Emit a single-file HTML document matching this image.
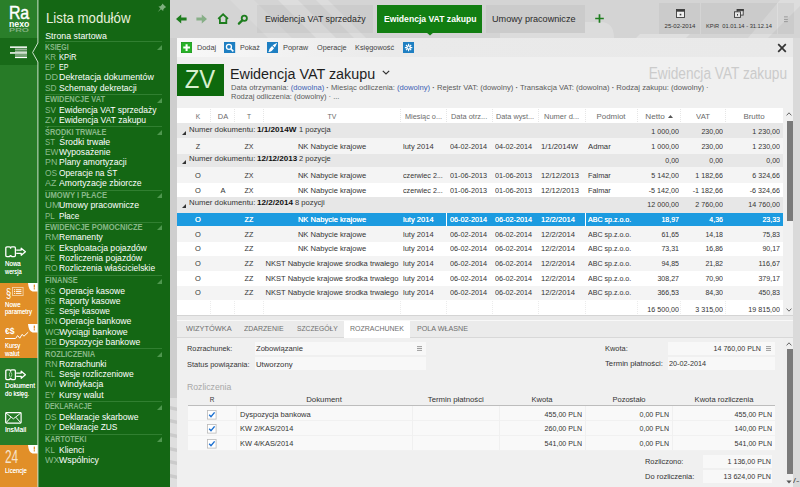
<!DOCTYPE html>
<html lang="pl"><head><meta charset="utf-8"><title>Ewidencja VAT zakupu</title>
<style>
html,body{margin:0;padding:0;}
body{width:800px;height:487px;overflow:hidden;position:relative;background:#d9d9d9;font-family:"Liberation Sans",sans-serif;}
#app{position:absolute;left:0;top:0;width:800px;height:487px;overflow:hidden;}
#app div,#app svg{position:absolute;}
.t{white-space:nowrap;overflow:visible;}
b{font-weight:bold;}
</style></head><body><div id="app">
<div style="left:170.00px;top:0.00px;width:630.00px;height:487.00px;background:#d4d4d4;"></div>
<svg width="630" height="38" viewBox="0 0 630 38" style="left:170px;top:0"><g fill="#fff"><polygon points="108,0 128,0 166,38 146,38" opacity=".22"/><polygon points="146,0 158,0 196,38 184,38" opacity=".2"/><polygon points="60,0 84,0 122,38 98,38" opacity=".12"/><path d="M330,38 V33 H415 V22 H432 Q444,23 444,38 Z" opacity=".2"/><polygon points="610,0 630,0 630,6 598,38 578,38" opacity=".22"/><polygon points="470,34 520,34 516,38 466,38" opacity=".25"/></g></svg>
<div style="left:170.00px;top:38.00px;width:7.00px;height:360.00px;background:#cecece;"></div>
<div style="left:170.00px;top:398.00px;width:7.00px;height:89.00px;background:#dfdfdf;"></div>
<svg width="7" height="89" viewBox="0 0 7 89" style="left:170px;top:398px"><g fill="#cbcbcb"><polygon points="0,8 7,9.6 7,13 0,11.4"/><polygon points="0,21 7,22.6 7,26 0,24.4"/><polygon points="0,35 7,36.6 7,40 0,38.4"/><polygon points="0,49 7,50.6 7,54 0,52.4"/><polygon points="0,62 7,63.6 7,67 0,65.4"/><polygon points="0,76 7,77.6 7,81 0,79.4"/></g></svg>
<div style="left:793.00px;top:38.00px;width:7.00px;height:449.00px;background:#dadada;"></div>
<div style="left:0.00px;top:0.00px;width:38.00px;height:487.00px;background:#277b27;"></div>
<div style="left:0.00px;top:0.00px;width:38.00px;height:38.00px;background:#2a7f2a;"></div>
<div style="left:0.00px;top:38.00px;width:38.00px;height:27.00px;background:#186a18;"></div>
<div style="left:38.00px;top:0.00px;width:132.00px;height:487.00px;background:#146714;"></div>
<div class="t" style="left:9.00px;top:0.57px;width:400px;text-align:left;font-size:18.5px;line-height:24.05px;color:#fff;transform:scaleX(0.8626);transform-origin:0 50%;letter-spacing:-0.3px;-webkit-text-stroke:0.45px #fff;">Ra</div>
<div class="t" style="left:9.20px;top:18.71px;width:400px;text-align:left;font-size:8.6px;line-height:11.18px;color:#fff;font-weight:bold;transform:scaleX(1.0163);transform-origin:0 50%;">nexo</div>
<div class="t" style="left:9.40px;top:27.42px;width:400px;text-align:left;font-size:5.2px;line-height:6.76px;color:#7fb07f;font-weight:bold;transform:scaleX(1.7748);transform-origin:0 50%;">PRO</div>
<svg width="18" height="13" viewBox="0 0 18 13" style="left:10.4px;top:46.4px"><rect x="0" y="0.4" width="17" height="1.5" fill="#fff"/><rect x="5" y="2.6" width="12" height="1.2" fill="#b8c9b8"/><rect x="5" y="4.6" width="12" height="1.2" fill="#b8c9b8"/><rect x="0" y="6.2" width="17" height="1.5" fill="#fff"/><rect x="5" y="8.4" width="12" height="1.2" fill="#b8c9b8"/><rect x="5" y="10.6" width="12" height="1.5" fill="#fff"/></svg>
<div style="left:0.00px;top:282.60px;width:38.40px;height:75.90px;background:#e18f28;"></div>
<div style="left:0.00px;top:445.00px;width:38.40px;height:42.00px;background:#e18f28;"></div>
<svg width="10" height="9" viewBox="0 0 10 9" style="left:28.3px;top:282.6px"><path d="M0,0 H10 V8.4 H4.6 Q0.5,7.4 0,0 Z" fill="#fff"/><rect x="5.7" y="1.6" width="1.3" height="3.0" fill="#e18f28"/><rect x="5.7" y="5.2" width="1.3" height="1.2" fill="#e18f28"/></svg>
<svg width="10" height="9" viewBox="0 0 10 9" style="left:28.3px;top:323.6px"><path d="M0,0 H10 V8.4 H4.6 Q0.5,7.4 0,0 Z" fill="#fff"/><rect x="5.7" y="1.6" width="1.3" height="3.0" fill="#e18f28"/><rect x="5.7" y="5.2" width="1.3" height="1.2" fill="#e18f28"/></svg>
<svg width="10" height="9" viewBox="0 0 10 9" style="left:28.3px;top:445px"><path d="M0,0 H10 V8.4 H4.6 Q0.5,7.4 0,0 Z" fill="#fff"/><rect x="5.7" y="1.6" width="1.3" height="3.0" fill="#e18f28"/><rect x="5.7" y="5.2" width="1.3" height="1.2" fill="#e18f28"/></svg>
<svg width="42" height="487" viewBox="0 0 42 487" style="left:0;top:0"><polygon points="38.6,43 32.8,52.5 38.6,62" fill="#146714"/><polyline points="37.9,0 37.9,43 32.6,52.5 37.9,62 37.9,487" fill="none" stroke="#cfe2cf" stroke-width="1"/></svg>
<div class="t" style="left:4.90px;top:259.77px;width:400px;text-align:left;font-size:6.5px;line-height:8.45px;color:#fff;transform:scaleX(0.9507);transform-origin:0 50%;text-shadow:0 0 0.5px rgba(255,255,255,.8);">Nowa</div>
<div class="t" style="left:4.90px;top:267.57px;width:400px;text-align:left;font-size:6.5px;line-height:8.45px;color:#fff;transform:scaleX(0.8838);transform-origin:0 50%;text-shadow:0 0 0.5px rgba(255,255,255,.8);">wersja</div>
<div class="t" style="left:4.90px;top:300.57px;width:400px;text-align:left;font-size:6.5px;line-height:8.45px;color:#fff;transform:scaleX(0.9327);transform-origin:0 50%;text-shadow:0 0 0.5px rgba(255,255,255,.8);">Nowe</div>
<div class="t" style="left:4.90px;top:308.38px;width:400px;text-align:left;font-size:6.5px;line-height:8.45px;color:#fff;transform:scaleX(0.9227);transform-origin:0 50%;text-shadow:0 0 0.5px rgba(255,255,255,.8);">parametry</div>
<div class="t" style="left:4.90px;top:342.38px;width:400px;text-align:left;font-size:6.5px;line-height:8.45px;color:#fff;transform:scaleX(0.9088);transform-origin:0 50%;text-shadow:0 0 0.5px rgba(255,255,255,.8);">Kursy</div>
<div class="t" style="left:4.90px;top:349.97px;width:400px;text-align:left;font-size:6.5px;line-height:8.45px;color:#fff;transform:scaleX(0.9556);transform-origin:0 50%;text-shadow:0 0 0.5px rgba(255,255,255,.8);">walut</div>
<div class="t" style="left:4.90px;top:382.38px;width:400px;text-align:left;font-size:6.5px;line-height:8.45px;color:#fff;transform:scaleX(1.0126);transform-origin:0 50%;text-shadow:0 0 0.5px rgba(255,255,255,.8);">Dokument</div>
<div class="t" style="left:4.90px;top:390.17px;width:400px;text-align:left;font-size:6.5px;line-height:8.45px;color:#fff;transform:scaleX(0.9340);transform-origin:0 50%;text-shadow:0 0 0.5px rgba(255,255,255,.8);">do księg.</div>
<div class="t" style="left:4.90px;top:425.57px;width:400px;text-align:left;font-size:6.5px;line-height:8.45px;color:#fff;transform:scaleX(1.0345);transform-origin:0 50%;text-shadow:0 0 0.5px rgba(255,255,255,.8);">InsMail</div>
<div class="t" style="left:4.90px;top:466.97px;width:400px;text-align:left;font-size:6.5px;line-height:8.45px;color:#fff;transform:scaleX(0.9183);transform-origin:0 50%;text-shadow:0 0 0.5px rgba(255,255,255,.8);">Licencje</div>
<div class="t" style="left:5.00px;top:446.43px;width:400px;text-align:left;font-size:17.5px;line-height:22.75px;color:#f6e3c8;transform:scaleX(0.6781);transform-origin:0 50%;">24</div>
<svg width="22" height="12" viewBox="0 0 22 12" style="left:4.9px;top:245.8px" fill="none" stroke="#fff" stroke-width="1.3"><path d="M0.8,2 Q0.8,0.9 1.9,0.9 H4.4 Q5.6,0.9 5.6,2.2 Q5.6,0.9 6.8,0.9 H9.3 Q10.4,0.9 10.4,2 V9.6 Q10.4,10.6 9.3,10.6 H7 L5.6,9.6 L4.2,10.6 H1.9 Q0.8,10.6 0.8,9.6 Z" stroke-linejoin="round"/><path d="M11.2,4.1 H16.2 V2.2 L20.4,5.7 L16.2,9.2 V7.3 H11.2" stroke-linejoin="round"/></svg>
<div class="t" style="left:5.60px;top:284.43px;width:400px;text-align:left;font-size:13.5px;line-height:17.55px;color:#fff;transform:scaleX(0.6926);transform-origin:0 50%;">§</div>
<svg width="12" height="10" viewBox="0 0 12 10" style="left:12.3px;top:287.2px"><rect x="0.5" y="0.5" width="10.6" height="8" fill="none" stroke="#f4d2a4" stroke-width="0.9"/><g fill="#fff"><rect x="2" y="2.3" width="1" height="0.9"/><rect x="3.8" y="2.3" width="5.6" height="0.9"/><rect x="2" y="4.1" width="1" height="0.9"/><rect x="3.8" y="4.1" width="5.6" height="0.9"/><rect x="2" y="5.9" width="1" height="0.9"/><rect x="3.8" y="5.9" width="5.6" height="0.9"/></g></svg>
<div class="t" style="left:5.40px;top:327.27px;width:400px;text-align:left;font-size:8.2px;line-height:10.66px;color:#fff;font-weight:bold;transform:scaleX(1.0525);transform-origin:0 50%;">€$</div>
<div style="left:5.40px;top:337.70px;width:9.80px;height:1.00px;background:#fff;"></div>
<svg width="14" height="9" viewBox="0 0 14 9" style="left:14.6px;top:330.6px" fill="none" stroke="#fff" stroke-width="1"><polyline points="0.4,7.8 2.6,4.6 4.8,7.2 7,3.4 9,5.2 13.2,1.2"/></svg>
<svg width="22" height="12" viewBox="0 0 22 12" style="left:4.9px;top:368.6px" fill="none" stroke="#fff" stroke-width="1.3"><path d="M0.8,2 Q0.8,0.9 1.9,0.9 H4.4 Q5.6,0.9 5.6,2.2 Q5.6,0.9 6.8,0.9 H9.3 Q10.4,0.9 10.4,2 V9.6 Q10.4,10.6 9.3,10.6 H7 L5.6,9.6 L4.2,10.6 H1.9 Q0.8,10.6 0.8,9.6 Z" stroke-linejoin="round"/><ellipse cx="5.6" cy="5.6" rx="1.2" ry="2.4" stroke-width="0.8" stroke="#bfe0bf"/><path d="M11.2,4.1 H16.2 V2.2 L20.4,5.7 L16.2,9.2 V7.3 H11.2" stroke-linejoin="round"/></svg>
<svg width="17" height="12" viewBox="0 0 17 12" style="left:5px;top:412.4px" fill="none" stroke="#fff" stroke-width="1.2"><rect x="0.7" y="0.7" width="15.4" height="10.4" rx="0.8"/><path d="M1,1 L8.4,6.8 L15.8,1 M1,10.8 L6,5.2 M15.8,10.8 L10.8,5.2" stroke-width="1"/></svg>
<div class="t" style="left:46.40px;top:9.37px;width:400px;text-align:left;font-size:14.2px;line-height:18.46px;color:#e9f0dd;transform:scaleX(0.9309);transform-origin:0 50%;">Lista modułów</div>
<svg width="9.6" height="9.6" viewBox="0 0 9 9" style="left:156.6px;top:2.6px" fill="#7fb07f" stroke="none"><path d="M5,0.4 L8.6,4 L7.4,4.4 L6,5.8 L5.8,7.6 L3.8,5.8 L0.6,8.6 L3.2,5.2 L1.4,3.2 L3.2,3 L4.6,1.6 Z"/></svg>
<div class="t" style="left:45.20px;top:30.78px;width:400px;text-align:left;font-size:8.8px;line-height:11.44px;color:#fff;">Strona startowa</div>
<div style="left:45.00px;top:41.10px;width:117.00px;height:1.00px;background:#317f31;"></div>
<div class="t" style="left:45.20px;top:42.57px;width:400px;text-align:left;font-size:8.2px;line-height:10.66px;color:#88b888;font-weight:bold;transform:scaleX(0.8509);transform-origin:0 50%;">KSIĘGI</div>
<svg width="5" height="5" viewBox="0 0 5 5" style="left:157.4px;top:44.70px"><polygon points="5,0 5,5 0,5" fill="#4f974f"/></svg>
<div class="t" style="left:45.20px;top:51.98px;width:400px;text-align:left;font-size:8.8px;line-height:11.44px;color:#8dbc8d;transform:scaleX(0.9059);transform-origin:0 50%;">KR</div>
<div class="t" style="left:59.30px;top:51.98px;width:400px;text-align:left;font-size:8.8px;line-height:11.44px;color:#fff;transform:scaleX(0.8712);transform-origin:0 50%;">KPiR</div>
<div class="t" style="left:45.20px;top:62.16px;width:400px;text-align:left;font-size:8.8px;line-height:11.44px;color:#8dbc8d;transform:scaleX(0.8535);transform-origin:0 50%;">EP</div>
<div class="t" style="left:59.30px;top:62.16px;width:400px;text-align:left;font-size:8.8px;line-height:11.44px;color:#fff;transform:scaleX(0.8008);transform-origin:0 50%;">EP</div>
<div class="t" style="left:45.20px;top:72.34px;width:400px;text-align:left;font-size:8.8px;line-height:11.44px;color:#8dbc8d;transform:scaleX(1.0371);transform-origin:0 50%;">DD</div>
<div class="t" style="left:59.30px;top:72.34px;width:400px;text-align:left;font-size:8.8px;line-height:11.44px;color:#fff;transform:scaleX(1.0051);transform-origin:0 50%;">Dekretacja dokumentów</div>
<div class="t" style="left:45.20px;top:82.52px;width:400px;text-align:left;font-size:8.8px;line-height:11.44px;color:#8dbc8d;transform:scaleX(0.9472);transform-origin:0 50%;">SD</div>
<div class="t" style="left:59.30px;top:82.52px;width:400px;text-align:left;font-size:8.8px;line-height:11.44px;color:#fff;transform:scaleX(0.9817);transform-origin:0 50%;">Schematy dekretacji</div>
<div style="left:45.00px;top:93.90px;width:117.00px;height:1.00px;background:#317f31;"></div>
<div class="t" style="left:45.20px;top:95.37px;width:400px;text-align:left;font-size:8.2px;line-height:10.66px;color:#88b888;font-weight:bold;transform:scaleX(0.9079);transform-origin:0 50%;">EWIDENCJE VAT</div>
<svg width="5" height="5" viewBox="0 0 5 5" style="left:157.4px;top:97.50px"><polygon points="5,0 5,5 0,5" fill="#4f974f"/></svg>
<div class="t" style="left:45.20px;top:104.78px;width:400px;text-align:left;font-size:8.8px;line-height:11.44px;color:#8dbc8d;transform:scaleX(0.9215);transform-origin:0 50%;">SV</div>
<div class="t" style="left:59.30px;top:104.78px;width:400px;text-align:left;font-size:8.8px;line-height:11.44px;color:#fff;transform:scaleX(0.9684);transform-origin:0 50%;">Ewidencja VAT sprzedaży</div>
<div class="t" style="left:45.20px;top:114.96px;width:400px;text-align:left;font-size:8.8px;line-height:11.44px;color:#8dbc8d;transform:scaleX(0.9947);transform-origin:0 50%;">ZV</div>
<div class="t" style="left:59.30px;top:114.96px;width:400px;text-align:left;font-size:8.8px;line-height:11.44px;color:#fff;transform:scaleX(0.9780);transform-origin:0 50%;">Ewidencja VAT zakupu</div>
<div style="left:45.00px;top:126.10px;width:117.00px;height:1.00px;background:#317f31;"></div>
<div class="t" style="left:45.20px;top:127.57px;width:400px;text-align:left;font-size:8.2px;line-height:10.66px;color:#88b888;font-weight:bold;transform:scaleX(0.8972);transform-origin:0 50%;">ŚRODKI TRWAŁE</div>
<svg width="5" height="5" viewBox="0 0 5 5" style="left:157.4px;top:129.70px"><polygon points="5,0 5,5 0,5" fill="#4f974f"/></svg>
<div class="t" style="left:45.20px;top:136.98px;width:400px;text-align:left;font-size:8.8px;line-height:11.44px;color:#8dbc8d;transform:scaleX(0.8816);transform-origin:0 50%;">ST</div>
<div class="t" style="left:59.30px;top:136.98px;width:400px;text-align:left;font-size:8.8px;line-height:11.44px;color:#fff;">Środki trwałe</div>
<div class="t" style="left:45.20px;top:147.16px;width:400px;text-align:left;font-size:8.8px;line-height:11.44px;color:#8dbc8d;transform:scaleX(0.9548);transform-origin:0 50%;">EW</div>
<div class="t" style="left:59.30px;top:147.16px;width:400px;text-align:left;font-size:8.8px;line-height:11.44px;color:#fff;transform:scaleX(0.9748);transform-origin:0 50%;">Wyposażenie</div>
<div class="t" style="left:45.20px;top:157.34px;width:400px;text-align:left;font-size:8.8px;line-height:11.44px;color:#8dbc8d;transform:scaleX(1.0058);transform-origin:0 50%;">PN</div>
<div class="t" style="left:59.30px;top:157.34px;width:400px;text-align:left;font-size:8.8px;line-height:11.44px;color:#fff;transform:scaleX(0.9806);transform-origin:0 50%;">Plany amortyzacji</div>
<div class="t" style="left:45.20px;top:167.52px;width:400px;text-align:left;font-size:8.8px;line-height:11.44px;color:#8dbc8d;transform:scaleX(0.9498);transform-origin:0 50%;">OS</div>
<div class="t" style="left:59.30px;top:167.52px;width:400px;text-align:left;font-size:8.8px;line-height:11.44px;color:#fff;transform:scaleX(0.9480);transform-origin:0 50%;">Operacje na ŚT</div>
<div class="t" style="left:45.20px;top:177.70px;width:400px;text-align:left;font-size:8.8px;line-height:11.44px;color:#8dbc8d;transform:scaleX(1.0155);transform-origin:0 50%;">AZ</div>
<div class="t" style="left:59.30px;top:177.70px;width:400px;text-align:left;font-size:8.8px;line-height:11.44px;color:#fff;transform:scaleX(0.9891);transform-origin:0 50%;">Amortyzacje zbiorcze</div>
<div style="left:45.00px;top:189.60px;width:117.00px;height:1.00px;background:#317f31;"></div>
<div class="t" style="left:45.20px;top:191.07px;width:400px;text-align:left;font-size:8.2px;line-height:10.66px;color:#88b888;font-weight:bold;transform:scaleX(0.9289);transform-origin:0 50%;">UMOWY I PŁACE</div>
<svg width="5" height="5" viewBox="0 0 5 5" style="left:157.4px;top:193.20px"><polygon points="5,0 5,5 0,5" fill="#4f974f"/></svg>
<div class="t" style="left:45.20px;top:200.48px;width:400px;text-align:left;font-size:8.8px;line-height:11.44px;color:#8dbc8d;transform:scaleX(1.0886);transform-origin:0 50%;">UM</div>
<div class="t" style="left:59.30px;top:200.48px;width:400px;text-align:left;font-size:8.8px;line-height:11.44px;color:#fff;transform:scaleX(0.9917);transform-origin:0 50%;">Umowy pracownicze</div>
<div class="t" style="left:45.20px;top:210.66px;width:400px;text-align:left;font-size:8.8px;line-height:11.44px;color:#8dbc8d;transform:scaleX(0.8997);transform-origin:0 50%;">PL</div>
<div class="t" style="left:59.30px;top:210.66px;width:400px;text-align:left;font-size:8.8px;line-height:11.44px;color:#fff;transform:scaleX(0.9199);transform-origin:0 50%;">Płace</div>
<div style="left:45.00px;top:221.50px;width:117.00px;height:1.00px;background:#317f31;"></div>
<div class="t" style="left:45.20px;top:222.97px;width:400px;text-align:left;font-size:8.2px;line-height:10.66px;color:#88b888;font-weight:bold;transform:scaleX(0.9164);transform-origin:0 50%;">EWIDENCJE POMOCNICZE</div>
<svg width="5" height="5" viewBox="0 0 5 5" style="left:157.4px;top:225.10px"><polygon points="5,0 5,5 0,5" fill="#4f974f"/></svg>
<div class="t" style="left:45.20px;top:232.38px;width:400px;text-align:left;font-size:8.8px;line-height:11.44px;color:#8dbc8d;transform:scaleX(1.0276);transform-origin:0 50%;">RM</div>
<div class="t" style="left:59.30px;top:232.38px;width:400px;text-align:left;font-size:8.8px;line-height:11.44px;color:#fff;transform:scaleX(0.9734);transform-origin:0 50%;">Remanenty</div>
<div class="t" style="left:45.20px;top:242.56px;width:400px;text-align:left;font-size:8.8px;line-height:11.44px;color:#8dbc8d;transform:scaleX(0.8695);transform-origin:0 50%;">EK</div>
<div class="t" style="left:59.30px;top:242.56px;width:400px;text-align:left;font-size:8.8px;line-height:11.44px;color:#fff;transform:scaleX(0.9813);transform-origin:0 50%;">Eksploatacja pojazdów</div>
<div class="t" style="left:45.20px;top:252.74px;width:400px;text-align:left;font-size:8.8px;line-height:11.44px;color:#8dbc8d;transform:scaleX(0.8695);transform-origin:0 50%;">KE</div>
<div class="t" style="left:59.30px;top:252.74px;width:400px;text-align:left;font-size:8.8px;line-height:11.44px;color:#fff;transform:scaleX(0.9820);transform-origin:0 50%;">Rozliczenia pojazdów</div>
<div class="t" style="left:45.20px;top:262.92px;width:400px;text-align:left;font-size:8.8px;line-height:11.44px;color:#8dbc8d;transform:scaleX(0.9628);transform-origin:0 50%;">RO</div>
<div class="t" style="left:59.30px;top:262.92px;width:400px;text-align:left;font-size:8.8px;line-height:11.44px;color:#fff;transform:scaleX(0.9594);transform-origin:0 50%;">Rozliczenia właścicielskie</div>
<div style="left:45.00px;top:274.90px;width:117.00px;height:1.00px;background:#317f31;"></div>
<div class="t" style="left:45.20px;top:276.37px;width:400px;text-align:left;font-size:8.2px;line-height:10.66px;color:#88b888;font-weight:bold;transform:scaleX(0.9114);transform-origin:0 50%;">FINANSE</div>
<svg width="5" height="5" viewBox="0 0 5 5" style="left:157.4px;top:278.50px"><polygon points="5,0 5,5 0,5" fill="#4f974f"/></svg>
<div class="t" style="left:45.20px;top:285.78px;width:400px;text-align:left;font-size:8.8px;line-height:11.44px;color:#8dbc8d;transform:scaleX(0.8894);transform-origin:0 50%;">KS</div>
<div class="t" style="left:59.30px;top:285.78px;width:400px;text-align:left;font-size:8.8px;line-height:11.44px;color:#fff;transform:scaleX(0.9707);transform-origin:0 50%;">Operacje kasowe</div>
<div class="t" style="left:45.20px;top:295.96px;width:400px;text-align:left;font-size:8.8px;line-height:11.44px;color:#8dbc8d;transform:scaleX(0.8680);transform-origin:0 50%;">RS</div>
<div class="t" style="left:59.30px;top:295.96px;width:400px;text-align:left;font-size:8.8px;line-height:11.44px;color:#fff;transform:scaleX(0.9765);transform-origin:0 50%;">Raporty kasowe</div>
<div class="t" style="left:45.20px;top:306.14px;width:400px;text-align:left;font-size:8.8px;line-height:11.44px;color:#8dbc8d;transform:scaleX(0.8300);transform-origin:0 50%;">SE</div>
<div class="t" style="left:59.30px;top:306.14px;width:400px;text-align:left;font-size:8.8px;line-height:11.44px;color:#fff;transform:scaleX(0.9386);transform-origin:0 50%;">Sesje kasowe</div>
<div class="t" style="left:45.20px;top:316.32px;width:400px;text-align:left;font-size:8.8px;line-height:11.44px;color:#8dbc8d;transform:scaleX(1.0160);transform-origin:0 50%;">BN</div>
<div class="t" style="left:59.30px;top:316.32px;width:400px;text-align:left;font-size:8.8px;line-height:11.44px;color:#fff;transform:scaleX(0.9870);transform-origin:0 50%;">Operacje bankowe</div>
<div class="t" style="left:45.20px;top:326.50px;width:400px;text-align:left;font-size:8.8px;line-height:11.44px;color:#8dbc8d;transform:scaleX(1.0052);transform-origin:0 50%;">WG</div>
<div class="t" style="left:59.30px;top:326.50px;width:400px;text-align:left;font-size:8.8px;line-height:11.44px;color:#fff;">Wyciągi bankowe</div>
<div class="t" style="left:45.20px;top:336.68px;width:400px;text-align:left;font-size:8.8px;line-height:11.44px;color:#8dbc8d;transform:scaleX(0.9799);transform-origin:0 50%;">DB</div>
<div class="t" style="left:59.30px;top:336.68px;width:400px;text-align:left;font-size:8.8px;line-height:11.44px;color:#fff;transform:scaleX(0.9826);transform-origin:0 50%;">Dyspozycje bankowe</div>
<div style="left:45.00px;top:348.20px;width:117.00px;height:1.00px;background:#317f31;"></div>
<div class="t" style="left:45.20px;top:349.67px;width:400px;text-align:left;font-size:8.2px;line-height:10.66px;color:#88b888;font-weight:bold;transform:scaleX(0.9100);transform-origin:0 50%;">ROZLICZENIA</div>
<svg width="5" height="5" viewBox="0 0 5 5" style="left:157.4px;top:351.80px"><polygon points="5,0 5,5 0,5" fill="#4f974f"/></svg>
<div class="t" style="left:45.20px;top:359.08px;width:400px;text-align:left;font-size:8.8px;line-height:11.44px;color:#8dbc8d;transform:scaleX(0.9956);transform-origin:0 50%;">RN</div>
<div class="t" style="left:59.30px;top:359.08px;width:400px;text-align:left;font-size:8.8px;line-height:11.44px;color:#fff;transform:scaleX(0.9717);transform-origin:0 50%;">Rozrachunki</div>
<div class="t" style="left:45.20px;top:369.26px;width:400px;text-align:left;font-size:8.8px;line-height:11.44px;color:#8dbc8d;transform:scaleX(0.8927);transform-origin:0 50%;">RL</div>
<div class="t" style="left:59.30px;top:369.26px;width:400px;text-align:left;font-size:8.8px;line-height:11.44px;color:#fff;transform:scaleX(0.9658);transform-origin:0 50%;">Sesje rozliczeniowe</div>
<div class="t" style="left:45.20px;top:379.44px;width:400px;text-align:left;font-size:8.8px;line-height:11.44px;color:#8dbc8d;transform:scaleX(1.0494);transform-origin:0 50%;">WI</div>
<div class="t" style="left:59.30px;top:379.44px;width:400px;text-align:left;font-size:8.8px;line-height:11.44px;color:#fff;transform:scaleX(0.9863);transform-origin:0 50%;">Windykacja</div>
<div class="t" style="left:45.20px;top:389.62px;width:400px;text-align:left;font-size:8.8px;line-height:11.44px;color:#8dbc8d;transform:scaleX(0.8472);transform-origin:0 50%;">EY</div>
<div class="t" style="left:59.30px;top:389.62px;width:400px;text-align:left;font-size:8.8px;line-height:11.44px;color:#fff;transform:scaleX(0.9794);transform-origin:0 50%;">Kursy walut</div>
<div style="left:45.00px;top:401.00px;width:117.00px;height:1.00px;background:#317f31;"></div>
<div class="t" style="left:45.20px;top:402.47px;width:400px;text-align:left;font-size:8.2px;line-height:10.66px;color:#88b888;font-weight:bold;transform:scaleX(0.8377);transform-origin:0 50%;">DEKLARACJE</div>
<svg width="5" height="5" viewBox="0 0 5 5" style="left:157.4px;top:404.60px"><polygon points="5,0 5,5 0,5" fill="#4f974f"/></svg>
<div class="t" style="left:45.20px;top:411.88px;width:400px;text-align:left;font-size:8.8px;line-height:11.44px;color:#8dbc8d;transform:scaleX(0.9472);transform-origin:0 50%;">DS</div>
<div class="t" style="left:59.30px;top:411.88px;width:400px;text-align:left;font-size:8.8px;line-height:11.44px;color:#fff;transform:scaleX(0.9746);transform-origin:0 50%;">Deklaracje skarbowe</div>
<div class="t" style="left:45.20px;top:422.06px;width:400px;text-align:left;font-size:8.8px;line-height:11.44px;color:#8dbc8d;transform:scaleX(0.9638);transform-origin:0 50%;">DY</div>
<div class="t" style="left:59.30px;top:422.06px;width:400px;text-align:left;font-size:8.8px;line-height:11.44px;color:#fff;transform:scaleX(0.9471);transform-origin:0 50%;">Deklaracje ZUS</div>
<div style="left:45.00px;top:433.70px;width:117.00px;height:1.00px;background:#317f31;"></div>
<div class="t" style="left:45.20px;top:435.17px;width:400px;text-align:left;font-size:8.2px;line-height:10.66px;color:#88b888;font-weight:bold;transform:scaleX(0.8708);transform-origin:0 50%;">KARTOTEKI</div>
<svg width="5" height="5" viewBox="0 0 5 5" style="left:157.4px;top:437.30px"><polygon points="5,0 5,5 0,5" fill="#4f974f"/></svg>
<div class="t" style="left:45.20px;top:444.58px;width:400px;text-align:left;font-size:8.8px;line-height:11.44px;color:#8dbc8d;transform:scaleX(0.9172);transform-origin:0 50%;">KL</div>
<div class="t" style="left:59.30px;top:444.58px;width:400px;text-align:left;font-size:8.8px;line-height:11.44px;color:#fff;transform:scaleX(0.9718);transform-origin:0 50%;">Klienci</div>
<div class="t" style="left:45.20px;top:454.76px;width:400px;text-align:left;font-size:8.8px;line-height:11.44px;color:#8dbc8d;transform:scaleX(1.0105);transform-origin:0 50%;">WX</div>
<div class="t" style="left:59.30px;top:454.76px;width:400px;text-align:left;font-size:8.8px;line-height:11.44px;color:#fff;transform:scaleX(0.9957);transform-origin:0 50%;">Wspólnicy</div>
<svg width="80" height="14" viewBox="0 0 80 14" style="left:174px;top:12px"><g fill="#1d7d1d"><path d="M2,7 L7.2,2.4 V5.6 H12.6 V8.4 H7.2 V11.6 Z"/><path d="M33,7 L27.8,2.4 V5.6 H22.4 V8.4 H27.8 V11.6 Z" opacity=".42"/></g><path d="M44.2,6.9 L49.1,2.3 L54,6.9 M45.9,6.2 V11 H52.3 V6.2" fill="none" stroke="#1d7d1d" stroke-width="1.8"/><circle cx="70.3" cy="6.2" r="2.6" fill="none" stroke="#1d7d1d" stroke-width="1.8"/><path d="M68.2,8.4 L64.9,11.6" stroke="#1d7d1d" stroke-width="2.3" stroke-linecap="round"/></svg>
<div style="left:257.00px;top:5.40px;width:116.00px;height:27.20px;background:rgba(0,0,0,.035);"></div>
<div style="left:377.00px;top:5.40px;width:105.00px;height:27.20px;background:#127e12;"></div>
<div style="left:486.00px;top:5.40px;width:99.00px;height:27.20px;background:rgba(0,0,0,.04);"></div>
<svg width="8" height="4" viewBox="0 0 8 4" style="left:426px;top:32.4px"><polygon points="0,0 8,0 4,3.6" fill="#127e12"/></svg>
<div class="t" style="left:264.50px;top:13.75px;width:400px;text-align:left;font-size:9.0px;line-height:11.7px;color:#2a2a2a;transform:scaleX(0.9772);transform-origin:0 50%;">Ewidencja VAT sprzedaży</div>
<div class="t" style="left:383.50px;top:13.75px;width:400px;text-align:left;font-size:9.0px;line-height:11.7px;color:#fff;font-weight:bold;transform:scaleX(0.9567);transform-origin:0 50%;">Ewidencja VAT zakupu</div>
<div class="t" style="left:492.00px;top:13.75px;width:400px;text-align:left;font-size:9.0px;line-height:11.7px;color:#2a2a2a;transform:scaleX(1.0118);transform-origin:0 50%;">Umowy pracownicze</div>
<svg width="9" height="9" viewBox="0 0 9 9" style="left:595.4px;top:14.4px"><path d="M4.5,0.2 V8.8 M0.2,4.5 H8.8" stroke="#1d7d1d" stroke-width="1.7"/></svg>
<div style="left:659.40px;top:3.40px;width:40.60px;height:31.00px;background:rgba(0,0,0,.04);"></div>
<div style="left:701.00px;top:3.40px;width:76.00px;height:31.00px;background:rgba(0,0,0,.04);"></div>
<div style="left:778.40px;top:3.40px;width:15.40px;height:31.00px;background:rgba(0,0,0,.04);"></div>
<svg width="9" height="9" viewBox="0 0 9 9" style="left:675.6px;top:8.8px"><rect x="0.5" y="0.5" width="8" height="8" fill="#f0f0f0" stroke="#3c3c3c" stroke-width="0.9"/><rect x="0.5" y="0.5" width="8" height="2.2" fill="#3c3c3c"/><rect x="3.7" y="4.8" width="1.6" height="1.6" fill="#3c3c3c"/></svg>
<svg width="10" height="9" viewBox="0 0 10 9" style="left:734.2px;top:8.8px" fill="#e6e6e6" stroke="#3c3c3c" stroke-width="0.9"><rect x="3.2" y="0.5" width="6" height="5.6"/><rect x="3.2" y="0.5" width="6" height="1.2" fill="#3c3c3c"/><rect x="0.5" y="2.8" width="6" height="5.6"/><rect x="3" y="5" width="1" height="1.6" fill="#3c3c3c" stroke="none"/></svg>
<div class="t" style="left:480.30px;top:21.54px;width:400px;text-align:center;font-size:6.1px;line-height:7.93px;color:#333;transform:scaleX(0.9870);transform-origin:50% 50%;">25-02-2014</div>
<div class="t" style="left:539.00px;top:21.54px;width:400px;text-align:center;font-size:6.1px;line-height:7.93px;color:#333;transform:scaleX(0.9402);transform-origin:50% 50%;white-space:pre;">KPiR  01.01.14 - 31.12.14</div>
<svg width="4" height="7" viewBox="0 0 4 7" style="left:784.2px;top:15.6px"><rect x="0" y="0.5" width="3.8" height="0.8" fill="#8a8a8a"/><rect x="0" y="2.9" width="3.8" height="0.8" fill="#8a8a8a"/><rect x="0" y="5.3" width="3.8" height="0.8" fill="#8a8a8a"/></svg>
<div style="left:177px;top:38px;width:616px;height:19.4px;background:linear-gradient(90deg,#f8f8f8 0%,#f4f4f4 12%,#eaeaea 34%,#e9e9e9 100%)"></div>
<div style="left:177px;top:57.4px;width:616px;height:51px;background:#f0f0f0"></div>
<svg width="11.2" height="11.2" viewBox="0 0 12 12" style="left:181px;top:42.3px"><rect x="0.4" y="0.4" width="11.2" height="11.2" fill="#27b227" stroke="#149414" stroke-width="0.9"/><path d="M6,2.4 V9.6 M2.4,6 H9.6" stroke="#fff" stroke-width="2.2"/></svg>
<div class="t" style="left:196.90px;top:42.89px;width:400px;text-align:left;font-size:7.4px;line-height:9.62px;color:#444;transform:scaleX(0.9878);transform-origin:0 50%;">Dodaj</div>
<svg width="11.2" height="11.2" viewBox="0 0 12 12" style="left:224.4px;top:42.3px"><rect width="12" height="12" fill="#1e7fc2"/><circle cx="5.3" cy="5.2" r="2.7" fill="none" stroke="#fff" stroke-width="1.4"/><path d="M7.3,7.3 L10,10" stroke="#fff" stroke-width="1.7"/></svg>
<div class="t" style="left:239.80px;top:42.89px;width:400px;text-align:left;font-size:7.4px;line-height:9.62px;color:#444;transform:scaleX(0.9627);transform-origin:0 50%;">Pokaż</div>
<svg width="11.2" height="11.2" viewBox="0 0 12 12" style="left:267.2px;top:42.3px"><rect width="12" height="12" fill="#1e7fc2"/><path d="M11,0.8 L6,3.6 L8.4,6 Z M5.4,4.4 L7.6,6.6 L5,9.6 Q3.2,10.8 1.4,10.6 Q2.4,9.4 2.6,7.4 Z" fill="#fff"/></svg>
<div class="t" style="left:282.90px;top:42.89px;width:400px;text-align:left;font-size:7.4px;line-height:9.62px;color:#444;transform:scaleX(1.0043);transform-origin:0 50%;">Popraw</div>
<div class="t" style="left:316.60px;top:42.89px;width:400px;text-align:left;font-size:7.4px;line-height:9.62px;color:#444;transform:scaleX(0.9891);transform-origin:0 50%;">Operacje</div>
<div class="t" style="left:355.40px;top:42.89px;width:400px;text-align:left;font-size:7.4px;line-height:9.62px;color:#444;transform:scaleX(0.9902);transform-origin:0 50%;">Księgowość</div>
<svg width="11.2" height="11.2" viewBox="0 0 12 12" style="left:403.2px;top:42.3px"><rect width="12" height="12" fill="#1e7fc2"/><g stroke="#fff" stroke-width="1.2"><path d="M6,2 V10 M2,6 H10 M3.2,3.2 L8.8,8.8 M8.8,3.2 L3.2,8.8"/></g><circle cx="6" cy="6" r="2.3" fill="#fff"/><circle cx="6" cy="6" r="1.1" fill="#1e7fc2"/></svg>
<svg width="10" height="10" viewBox="0 0 10 10" style="left:777.2px;top:43.2px"><path d="M1.2,1.2 L8.8,8.8 M8.8,1.2 L1.2,8.8" stroke="#333" stroke-width="1.7"/></svg>
<div style="left:177.00px;top:64.00px;width:47.00px;height:32.20px;background:#0d6a0d;"></div>
<div class="t" style="left:0.10px;top:62.37px;width:400px;text-align:center;font-size:26.5px;line-height:34.45px;color:#d8efcf;transform:scaleX(0.9007);transform-origin:50% 50%;">ZV</div>
<div class="t" style="left:230.40px;top:65.10px;width:400px;text-align:left;font-size:14.0px;line-height:18.2px;color:#1e1e1e;transform:scaleX(1.0251);transform-origin:0 50%;">Ewidencja VAT zakupu</div>
<svg width="8" height="5" viewBox="0 0 8 5" style="left:381.6px;top:70.4px"><polyline points="0.8,0.8 4,4 7.2,0.8" fill="none" stroke="#333" stroke-width="1.2"/></svg>
<div class="t" style="left:387.20px;top:61.89px;width:400px;text-align:right;font-size:17.4px;line-height:22.62px;color:#cbcbcb;transform:scaleX(0.7862);transform-origin:100% 50%;">Ewidencja VAT zakupu</div>
<div class="t" style="left:230.6px;top:83.26px;width:700px;font-size:7.6px;line-height:9.88px;color:#5a5a5a;transform:scaleX(1.0035);transform-origin:0 50%;">Data otrzymania: <span style="color:#3c5fb4">(dowolna)</span> <b>·</b> Miesiąc odliczenia: <span style="color:#3c5fb4">(dowolny)</span> <b>·</b> Rejestr VAT: (dowolny) <b>·</b> Transakcja VAT: (dowolna) <b>·</b> Rodzaj zakupu: (dowolny) ·</div>
<div class="t" style="left:230.60px;top:92.46px;width:400px;text-align:left;font-size:7.6px;line-height:9.88px;color:#5a5a5a;transform:scaleX(0.9879);transform-origin:0 50%;">Rodzaj odliczenia: (dowolny) · ...</div>
<div style="left:177.00px;top:108.20px;width:606.00px;height:14.70px;background:#fff;"></div>
<div style="left:209.70px;top:109.20px;width:0;height:12.70px;border-left:1px dotted #e6e6e6"></div>
<div style="left:234.30px;top:109.20px;width:0;height:12.70px;border-left:1px dotted #e6e6e6"></div>
<div style="left:262.50px;top:109.20px;width:0;height:12.70px;border-left:1px dotted #e6e6e6"></div>
<div style="left:399.50px;top:109.20px;width:0;height:12.70px;border-left:1px dotted #e6e6e6"></div>
<div style="left:446.00px;top:109.20px;width:0;height:12.70px;border-left:1px dotted #e6e6e6"></div>
<div style="left:492.00px;top:109.20px;width:0;height:12.70px;border-left:1px dotted #e6e6e6"></div>
<div style="left:538.20px;top:109.20px;width:0;height:12.70px;border-left:1px dotted #e6e6e6"></div>
<div style="left:584.50px;top:109.20px;width:0;height:12.70px;border-left:1px dotted #e6e6e6"></div>
<div style="left:636.50px;top:109.20px;width:0;height:12.70px;border-left:1px dotted #e6e6e6"></div>
<div style="left:680.30px;top:109.20px;width:0;height:12.70px;border-left:1px dotted #e6e6e6"></div>
<div style="left:725.10px;top:109.20px;width:0;height:12.70px;border-left:1px dotted #e6e6e6"></div>
<div class="t" style="left:-2.00px;top:111.51px;width:400px;text-align:center;font-size:7.75px;line-height:10.08px;color:#6a6a6a;transform:scaleX(0.8640);transform-origin:50% 50%;">K</div>
<div class="t" style="left:22.80px;top:111.51px;width:400px;text-align:center;font-size:7.75px;line-height:10.08px;color:#6a6a6a;transform:scaleX(0.9628);transform-origin:50% 50%;">DA</div>
<div class="t" style="left:48.80px;top:111.51px;width:400px;text-align:center;font-size:7.75px;line-height:10.08px;color:#6a6a6a;transform:scaleX(0.8522);transform-origin:50% 50%;">T</div>
<div class="t" style="left:132.00px;top:111.51px;width:400px;text-align:center;font-size:7.75px;line-height:10.08px;color:#6a6a6a;transform:scaleX(0.8895);transform-origin:50% 50%;">TV</div>
<div class="t" style="left:404.60px;top:111.51px;width:400px;text-align:left;font-size:7.75px;line-height:10.08px;color:#6a6a6a;transform:scaleX(0.9451);transform-origin:0 50%;">Miesiąc o...</div>
<div class="t" style="left:451.00px;top:111.51px;width:400px;text-align:left;font-size:7.75px;line-height:10.08px;color:#6a6a6a;transform:scaleX(0.9562);transform-origin:0 50%;">Data otrz...</div>
<div class="t" style="left:496.20px;top:111.51px;width:400px;text-align:left;font-size:7.75px;line-height:10.08px;color:#6a6a6a;transform:scaleX(0.9416);transform-origin:0 50%;">Data wyst...</div>
<div class="t" style="left:544.00px;top:111.51px;width:400px;text-align:left;font-size:7.75px;line-height:10.08px;color:#6a6a6a;transform:scaleX(0.9699);transform-origin:0 50%;">Numer d...</div>
<div class="t" style="left:411.00px;top:111.51px;width:400px;text-align:center;font-size:7.75px;line-height:10.08px;color:#6a6a6a;transform:scaleX(1.0190);transform-origin:50% 50%;">Podmiot</div>
<div class="t" style="left:454.60px;top:111.51px;width:400px;text-align:center;font-size:7.75px;line-height:10.08px;color:#6a6a6a;transform:scaleX(1.0536);transform-origin:50% 50%;">Netto</div>
<svg width="5" height="3" viewBox="0 0 5 3" style="left:667.6px;top:114.6px"><polygon points="0,3 2.5,0 5,3" fill="#555"/></svg>
<div class="t" style="left:503.40px;top:111.51px;width:400px;text-align:center;font-size:7.75px;line-height:10.08px;color:#6a6a6a;transform:scaleX(0.9894);transform-origin:50% 50%;">VAT</div>
<div class="t" style="left:554.40px;top:111.51px;width:400px;text-align:center;font-size:7.75px;line-height:10.08px;color:#6a6a6a;transform:scaleX(1.0237);transform-origin:50% 50%;">Brutto</div>
<div style="left:177.00px;top:122.90px;width:606.00px;height:14.65px;background:#e7e7e7;"></div>
<svg width="4" height="4" viewBox="0 0 4 4" style="left:182.2px;top:130.50px"><polygon points="4,0 4,4 0,4" fill="#333"/></svg>
<div class="t" style="left:188.80px;top:124.96px;width:400px;text-align:left;font-size:7.75px;line-height:10.08px;color:#343434;transform:scaleX(1.0068);transform-origin:0 50%;white-space:pre;">Numer dokumentu: </div>
<div class="t" style="left:257.32px;top:124.96px;width:400px;text-align:left;font-size:7.75px;line-height:10.08px;color:#111;font-weight:bold;transform:scaleX(1.0495);transform-origin:0 50%;">1/1/2014W</div>
<div class="t" style="left:298.66px;top:124.96px;width:400px;text-align:left;font-size:7.75px;line-height:10.08px;color:#343434;transform:scaleX(0.9676);transform-origin:0 50%;">1 pozycja</div>
<div class="t" style="left:278.80px;top:126.76px;width:400px;text-align:right;font-size:7.75px;line-height:10.08px;color:#343434;transform:scaleX(0.9179);transform-origin:100% 50%;">1 000,00</div>
<div class="t" style="left:323.40px;top:126.76px;width:400px;text-align:right;font-size:7.75px;line-height:10.08px;color:#343434;transform:scaleX(0.9110);transform-origin:100% 50%;">230,00</div>
<div class="t" style="left:380.00px;top:126.76px;width:400px;text-align:right;font-size:7.75px;line-height:10.08px;color:#343434;transform:scaleX(0.9179);transform-origin:100% 50%;">1 230,00</div>
<div style="left:177.00px;top:137.50px;width:606.00px;height:16.30px;background:#f4f4f4;"></div>
<div class="t" style="left:-2.00px;top:141.86px;width:400px;text-align:center;font-size:7.75px;line-height:10.08px;color:#343434;transform:scaleX(0.9268);transform-origin:50% 50%;">Z</div>
<div class="t" style="left:48.80px;top:141.86px;width:400px;text-align:center;font-size:7.75px;line-height:10.08px;color:#343434;transform:scaleX(0.9016);transform-origin:50% 50%;">ZX</div>
<div class="t" style="left:132.00px;top:141.86px;width:400px;text-align:center;font-size:7.75px;line-height:10.08px;color:#343434;transform:scaleX(0.9774);transform-origin:50% 50%;">NK Nabycie krajowe</div>
<div class="t" style="left:403.40px;top:141.86px;width:400px;text-align:left;font-size:7.75px;line-height:10.08px;color:#343434;transform:scaleX(0.9727);transform-origin:0 50%;">luty 2014</div>
<div class="t" style="left:449.60px;top:141.86px;width:400px;text-align:left;font-size:7.75px;line-height:10.08px;color:#343434;transform:scaleX(0.9370);transform-origin:0 50%;">04-02-2014</div>
<div class="t" style="left:495.20px;top:141.86px;width:400px;text-align:left;font-size:7.75px;line-height:10.08px;color:#343434;transform:scaleX(0.9370);transform-origin:0 50%;">04-02-2014</div>
<div class="t" style="left:541.20px;top:141.86px;width:400px;text-align:left;font-size:7.75px;line-height:10.08px;color:#343434;transform:scaleX(0.9901);transform-origin:0 50%;">1/1/2014W</div>
<div class="t" style="left:588.20px;top:141.86px;width:400px;text-align:left;font-size:7.75px;line-height:10.08px;color:#343434;transform:scaleX(0.9953);transform-origin:0 50%;">Admar</div>
<div class="t" style="left:278.80px;top:141.86px;width:400px;text-align:right;font-size:7.75px;line-height:10.08px;color:#343434;transform:scaleX(0.9179);transform-origin:100% 50%;">1 000,00</div>
<div class="t" style="left:323.40px;top:141.86px;width:400px;text-align:right;font-size:7.75px;line-height:10.08px;color:#343434;transform:scaleX(0.9110);transform-origin:100% 50%;">230,00</div>
<div class="t" style="left:380.00px;top:141.86px;width:400px;text-align:right;font-size:7.75px;line-height:10.08px;color:#343434;transform:scaleX(0.9179);transform-origin:100% 50%;">1 230,00</div>
<div style="left:177.00px;top:153.75px;width:606.00px;height:13.20px;background:#e7e7e7;"></div>
<svg width="4" height="4" viewBox="0 0 4 4" style="left:182.2px;top:160.07px"><polygon points="4,0 4,4 0,4" fill="#333"/></svg>
<div class="t" style="left:188.80px;top:154.26px;width:400px;text-align:left;font-size:7.75px;line-height:10.08px;color:#343434;transform:scaleX(1.0068);transform-origin:0 50%;white-space:pre;">Numer dokumentu: </div>
<div class="t" style="left:257.32px;top:154.26px;width:400px;text-align:left;font-size:7.75px;line-height:10.08px;color:#111;font-weight:bold;transform:scaleX(1.0355);transform-origin:0 50%;">12/12/2013</div>
<div class="t" style="left:299.49px;top:154.26px;width:400px;text-align:left;font-size:7.75px;line-height:10.08px;color:#343434;transform:scaleX(0.9709);transform-origin:0 50%;">2 pozycje</div>
<div class="t" style="left:278.80px;top:156.06px;width:400px;text-align:right;font-size:7.75px;line-height:10.08px;color:#343434;transform:scaleX(0.9033);transform-origin:100% 50%;">0,00</div>
<div class="t" style="left:323.40px;top:156.06px;width:400px;text-align:right;font-size:7.75px;line-height:10.08px;color:#343434;transform:scaleX(0.9033);transform-origin:100% 50%;">0,00</div>
<div class="t" style="left:380.00px;top:156.06px;width:400px;text-align:right;font-size:7.75px;line-height:10.08px;color:#343434;transform:scaleX(0.9033);transform-origin:100% 50%;">0,00</div>
<div style="left:177.00px;top:166.90px;width:606.00px;height:15.90px;background:#f4f4f4;"></div>
<div class="t" style="left:-2.00px;top:171.06px;width:400px;text-align:center;font-size:7.75px;line-height:10.08px;color:#343434;transform:scaleX(0.9630);transform-origin:50% 50%;">O</div>
<div class="t" style="left:48.80px;top:171.06px;width:400px;text-align:center;font-size:7.75px;line-height:10.08px;color:#343434;transform:scaleX(0.9016);transform-origin:50% 50%;">ZX</div>
<div class="t" style="left:132.00px;top:171.06px;width:400px;text-align:center;font-size:7.75px;line-height:10.08px;color:#343434;transform:scaleX(0.9774);transform-origin:50% 50%;">NK Nabycie krajowe</div>
<div class="t" style="left:403.40px;top:171.06px;width:400px;text-align:left;font-size:7.75px;line-height:10.08px;color:#343434;transform:scaleX(0.9254);transform-origin:0 50%;">czerwiec 2...</div>
<div class="t" style="left:449.60px;top:171.06px;width:400px;text-align:left;font-size:7.75px;line-height:10.08px;color:#343434;transform:scaleX(0.9370);transform-origin:0 50%;">01-06-2013</div>
<div class="t" style="left:495.20px;top:171.06px;width:400px;text-align:left;font-size:7.75px;line-height:10.08px;color:#343434;transform:scaleX(0.9370);transform-origin:0 50%;">01-06-2013</div>
<div class="t" style="left:541.20px;top:171.06px;width:400px;text-align:left;font-size:7.75px;line-height:10.08px;color:#343434;transform:scaleX(0.9769);transform-origin:0 50%;">12/12/2013</div>
<div class="t" style="left:588.20px;top:171.06px;width:400px;text-align:left;font-size:7.75px;line-height:10.08px;color:#343434;transform:scaleX(0.9441);transform-origin:0 50%;">Falmar</div>
<div class="t" style="left:278.80px;top:171.06px;width:400px;text-align:right;font-size:7.75px;line-height:10.08px;color:#343434;transform:scaleX(0.9179);transform-origin:100% 50%;">5 142,00</div>
<div class="t" style="left:323.40px;top:171.06px;width:400px;text-align:right;font-size:7.75px;line-height:10.08px;color:#343434;transform:scaleX(0.9179);transform-origin:100% 50%;">1 182,66</div>
<div class="t" style="left:380.00px;top:171.06px;width:400px;text-align:right;font-size:7.75px;line-height:10.08px;color:#343434;transform:scaleX(0.9179);transform-origin:100% 50%;">6 324,66</div>
<div style="left:177.00px;top:182.75px;width:606.00px;height:14.55px;background:#fff;"></div>
<div class="t" style="left:-2.00px;top:185.56px;width:400px;text-align:center;font-size:7.75px;line-height:10.08px;color:#343434;transform:scaleX(0.9630);transform-origin:50% 50%;">O</div>
<div class="t" style="left:22.80px;top:185.56px;width:400px;text-align:center;font-size:7.75px;line-height:10.08px;color:#343434;transform:scaleX(0.9608);transform-origin:50% 50%;">A</div>
<div class="t" style="left:48.80px;top:185.56px;width:400px;text-align:center;font-size:7.75px;line-height:10.08px;color:#343434;transform:scaleX(0.9016);transform-origin:50% 50%;">ZX</div>
<div class="t" style="left:132.00px;top:185.56px;width:400px;text-align:center;font-size:7.75px;line-height:10.08px;color:#343434;transform:scaleX(0.9774);transform-origin:50% 50%;">NK Nabycie krajowe</div>
<div class="t" style="left:403.40px;top:185.56px;width:400px;text-align:left;font-size:7.75px;line-height:10.08px;color:#343434;transform:scaleX(0.9254);transform-origin:0 50%;">czerwiec 2...</div>
<div class="t" style="left:449.60px;top:185.56px;width:400px;text-align:left;font-size:7.75px;line-height:10.08px;color:#343434;transform:scaleX(0.9370);transform-origin:0 50%;">01-06-2013</div>
<div class="t" style="left:495.20px;top:185.56px;width:400px;text-align:left;font-size:7.75px;line-height:10.08px;color:#343434;transform:scaleX(0.9370);transform-origin:0 50%;">01-06-2013</div>
<div class="t" style="left:541.20px;top:185.56px;width:400px;text-align:left;font-size:7.75px;line-height:10.08px;color:#343434;transform:scaleX(0.9769);transform-origin:0 50%;">12/12/2013</div>
<div class="t" style="left:588.20px;top:185.56px;width:400px;text-align:left;font-size:7.75px;line-height:10.08px;color:#343434;transform:scaleX(0.9441);transform-origin:0 50%;">Falmar</div>
<div class="t" style="left:278.80px;top:185.56px;width:400px;text-align:right;font-size:7.75px;line-height:10.08px;color:#343434;transform:scaleX(0.9259);transform-origin:100% 50%;">-5 142,00</div>
<div class="t" style="left:323.40px;top:185.56px;width:400px;text-align:right;font-size:7.75px;line-height:10.08px;color:#343434;transform:scaleX(0.9259);transform-origin:100% 50%;">-1 182,66</div>
<div class="t" style="left:380.00px;top:185.56px;width:400px;text-align:right;font-size:7.75px;line-height:10.08px;color:#343434;transform:scaleX(0.9259);transform-origin:100% 50%;">-6 324,66</div>
<div style="left:177.00px;top:197.25px;width:606.00px;height:15.30px;background:#e7e7e7;"></div>
<svg width="4" height="4" viewBox="0 0 4 4" style="left:182.2px;top:204.44px"><polygon points="4,0 4,4 0,4" fill="#333"/></svg>
<div class="t" style="left:188.80px;top:198.26px;width:400px;text-align:left;font-size:7.75px;line-height:10.08px;color:#343434;transform:scaleX(1.0068);transform-origin:0 50%;white-space:pre;">Numer dokumentu: </div>
<div class="t" style="left:257.32px;top:198.26px;width:400px;text-align:left;font-size:7.75px;line-height:10.08px;color:#111;font-weight:bold;transform:scaleX(1.0424);transform-origin:0 50%;">12/2/2014</div>
<div class="t" style="left:295.26px;top:198.26px;width:400px;text-align:left;font-size:7.75px;line-height:10.08px;color:#343434;transform:scaleX(0.9826);transform-origin:0 50%;">8 pozycji</div>
<div class="t" style="left:278.80px;top:200.06px;width:400px;text-align:right;font-size:7.75px;line-height:10.08px;color:#343434;transform:scaleX(0.9187);transform-origin:100% 50%;">12 000,00</div>
<div class="t" style="left:323.40px;top:200.06px;width:400px;text-align:right;font-size:7.75px;line-height:10.08px;color:#343434;transform:scaleX(0.9179);transform-origin:100% 50%;">2 760,00</div>
<div class="t" style="left:380.00px;top:200.06px;width:400px;text-align:right;font-size:7.75px;line-height:10.08px;color:#343434;transform:scaleX(0.9187);transform-origin:100% 50%;">14 760,00</div>
<div style="left:177.00px;top:212.50px;width:606.00px;height:13.95px;background:#1c9be0;"></div>
<div class="t" style="left:-2.00px;top:214.96px;width:400px;text-align:center;font-size:7.75px;line-height:10.08px;color:#fff;transform:scaleX(0.9630);transform-origin:50% 50%;text-shadow:0 0 0.6px #fff;">O</div>
<div class="t" style="left:48.80px;top:214.96px;width:400px;text-align:center;font-size:7.75px;line-height:10.08px;color:#fff;transform:scaleX(0.9268);transform-origin:50% 50%;text-shadow:0 0 0.6px #fff;">ZZ</div>
<div class="t" style="left:132.00px;top:214.96px;width:400px;text-align:center;font-size:7.75px;line-height:10.08px;color:#fff;transform:scaleX(0.9774);transform-origin:50% 50%;text-shadow:0 0 0.6px #fff;">NK Nabycie krajowe</div>
<div class="t" style="left:403.40px;top:214.96px;width:400px;text-align:left;font-size:7.75px;line-height:10.08px;color:#fff;transform:scaleX(0.9727);transform-origin:0 50%;text-shadow:0 0 0.6px #fff;">luty 2014</div>
<div class="t" style="left:449.60px;top:214.96px;width:400px;text-align:left;font-size:7.75px;line-height:10.08px;color:#fff;transform:scaleX(0.9370);transform-origin:0 50%;text-shadow:0 0 0.6px #fff;">06-02-2014</div>
<div class="t" style="left:495.20px;top:214.96px;width:400px;text-align:left;font-size:7.75px;line-height:10.08px;color:#fff;transform:scaleX(0.9370);transform-origin:0 50%;text-shadow:0 0 0.6px #fff;">06-02-2014</div>
<div class="t" style="left:541.20px;top:214.96px;width:400px;text-align:left;font-size:7.75px;line-height:10.08px;color:#fff;transform:scaleX(0.9834);transform-origin:0 50%;text-shadow:0 0 0.6px #fff;">12/2/2014</div>
<div class="t" style="left:588.20px;top:214.96px;width:400px;text-align:left;font-size:7.75px;line-height:10.08px;color:#fff;transform:scaleX(0.9125);transform-origin:0 50%;text-shadow:0 0 0.6px #fff;">ABC sp.z.o.o.</div>
<div class="t" style="left:278.80px;top:214.96px;width:400px;text-align:right;font-size:7.75px;line-height:10.08px;color:#fff;transform:scaleX(0.9080);transform-origin:100% 50%;text-shadow:0 0 0.6px #fff;">18,97</div>
<div class="t" style="left:323.40px;top:214.96px;width:400px;text-align:right;font-size:7.75px;line-height:10.08px;color:#fff;transform:scaleX(0.9033);transform-origin:100% 50%;text-shadow:0 0 0.6px #fff;">4,36</div>
<div class="t" style="left:380.00px;top:214.96px;width:400px;text-align:right;font-size:7.75px;line-height:10.08px;color:#fff;transform:scaleX(0.9080);transform-origin:100% 50%;text-shadow:0 0 0.6px #fff;">23,33</div>
<div style="left:446.00px;top:212.50px;width:1.00px;height:13.90px;background:#fff;"></div>
<div style="left:584.60px;top:212.50px;width:1.00px;height:13.90px;background:#fff;"></div>
<div style="left:177.00px;top:226.40px;width:606.00px;height:15.15px;background:#f4f4f4;"></div>
<div class="t" style="left:-2.00px;top:229.56px;width:400px;text-align:center;font-size:7.75px;line-height:10.08px;color:#343434;transform:scaleX(0.9630);transform-origin:50% 50%;">O</div>
<div class="t" style="left:48.80px;top:229.56px;width:400px;text-align:center;font-size:7.75px;line-height:10.08px;color:#343434;transform:scaleX(0.9268);transform-origin:50% 50%;">ZZ</div>
<div class="t" style="left:132.00px;top:229.56px;width:400px;text-align:center;font-size:7.75px;line-height:10.08px;color:#343434;transform:scaleX(0.9774);transform-origin:50% 50%;">NK Nabycie krajowe</div>
<div class="t" style="left:403.40px;top:229.56px;width:400px;text-align:left;font-size:7.75px;line-height:10.08px;color:#343434;transform:scaleX(0.9727);transform-origin:0 50%;">luty 2014</div>
<div class="t" style="left:449.60px;top:229.56px;width:400px;text-align:left;font-size:7.75px;line-height:10.08px;color:#343434;transform:scaleX(0.9370);transform-origin:0 50%;">06-02-2014</div>
<div class="t" style="left:495.20px;top:229.56px;width:400px;text-align:left;font-size:7.75px;line-height:10.08px;color:#343434;transform:scaleX(0.9370);transform-origin:0 50%;">06-02-2014</div>
<div class="t" style="left:541.20px;top:229.56px;width:400px;text-align:left;font-size:7.75px;line-height:10.08px;color:#343434;transform:scaleX(0.9834);transform-origin:0 50%;">12/2/2014</div>
<div class="t" style="left:588.20px;top:229.56px;width:400px;text-align:left;font-size:7.75px;line-height:10.08px;color:#343434;transform:scaleX(0.9125);transform-origin:0 50%;">ABC sp.z.o.o.</div>
<div class="t" style="left:278.80px;top:229.56px;width:400px;text-align:right;font-size:7.75px;line-height:10.08px;color:#343434;transform:scaleX(0.9080);transform-origin:100% 50%;">61,65</div>
<div class="t" style="left:323.40px;top:229.56px;width:400px;text-align:right;font-size:7.75px;line-height:10.08px;color:#343434;transform:scaleX(0.9080);transform-origin:100% 50%;">14,18</div>
<div class="t" style="left:380.00px;top:229.56px;width:400px;text-align:right;font-size:7.75px;line-height:10.08px;color:#343434;transform:scaleX(0.9080);transform-origin:100% 50%;">75,83</div>
<div style="left:177.00px;top:241.50px;width:606.00px;height:14.75px;background:#fff;"></div>
<div class="t" style="left:-2.00px;top:244.26px;width:400px;text-align:center;font-size:7.75px;line-height:10.08px;color:#343434;transform:scaleX(0.9630);transform-origin:50% 50%;">O</div>
<div class="t" style="left:48.80px;top:244.26px;width:400px;text-align:center;font-size:7.75px;line-height:10.08px;color:#343434;transform:scaleX(0.9268);transform-origin:50% 50%;">ZZ</div>
<div class="t" style="left:132.00px;top:244.26px;width:400px;text-align:center;font-size:7.75px;line-height:10.08px;color:#343434;transform:scaleX(0.9774);transform-origin:50% 50%;">NK Nabycie krajowe</div>
<div class="t" style="left:403.40px;top:244.26px;width:400px;text-align:left;font-size:7.75px;line-height:10.08px;color:#343434;transform:scaleX(0.9727);transform-origin:0 50%;">luty 2014</div>
<div class="t" style="left:449.60px;top:244.26px;width:400px;text-align:left;font-size:7.75px;line-height:10.08px;color:#343434;transform:scaleX(0.9370);transform-origin:0 50%;">06-02-2014</div>
<div class="t" style="left:495.20px;top:244.26px;width:400px;text-align:left;font-size:7.75px;line-height:10.08px;color:#343434;transform:scaleX(0.9370);transform-origin:0 50%;">06-02-2014</div>
<div class="t" style="left:541.20px;top:244.26px;width:400px;text-align:left;font-size:7.75px;line-height:10.08px;color:#343434;transform:scaleX(0.9834);transform-origin:0 50%;">12/2/2014</div>
<div class="t" style="left:588.20px;top:244.26px;width:400px;text-align:left;font-size:7.75px;line-height:10.08px;color:#343434;transform:scaleX(0.9125);transform-origin:0 50%;">ABC sp.z.o.o.</div>
<div class="t" style="left:278.80px;top:244.26px;width:400px;text-align:right;font-size:7.75px;line-height:10.08px;color:#343434;transform:scaleX(0.9080);transform-origin:100% 50%;">73,31</div>
<div class="t" style="left:323.40px;top:244.26px;width:400px;text-align:right;font-size:7.75px;line-height:10.08px;color:#343434;transform:scaleX(0.9080);transform-origin:100% 50%;">16,86</div>
<div class="t" style="left:380.00px;top:244.26px;width:400px;text-align:right;font-size:7.75px;line-height:10.08px;color:#343434;transform:scaleX(0.9080);transform-origin:100% 50%;">90,17</div>
<div style="left:177.00px;top:256.20px;width:606.00px;height:14.45px;background:#f4f4f4;"></div>
<div class="t" style="left:-2.00px;top:258.96px;width:400px;text-align:center;font-size:7.75px;line-height:10.08px;color:#343434;transform:scaleX(0.9630);transform-origin:50% 50%;">O</div>
<div class="t" style="left:48.80px;top:258.96px;width:400px;text-align:center;font-size:7.75px;line-height:10.08px;color:#343434;transform:scaleX(0.9268);transform-origin:50% 50%;">ZZ</div>
<div class="t" style="left:132.00px;top:258.96px;width:400px;text-align:center;font-size:7.75px;line-height:10.08px;color:#343434;transform:scaleX(0.9747);transform-origin:50% 50%;">NKST Nabycie krajowe środka trwałego</div>
<div class="t" style="left:403.40px;top:258.96px;width:400px;text-align:left;font-size:7.75px;line-height:10.08px;color:#343434;transform:scaleX(0.9727);transform-origin:0 50%;">luty 2014</div>
<div class="t" style="left:449.60px;top:258.96px;width:400px;text-align:left;font-size:7.75px;line-height:10.08px;color:#343434;transform:scaleX(0.9370);transform-origin:0 50%;">06-02-2014</div>
<div class="t" style="left:495.20px;top:258.96px;width:400px;text-align:left;font-size:7.75px;line-height:10.08px;color:#343434;transform:scaleX(0.9370);transform-origin:0 50%;">06-02-2014</div>
<div class="t" style="left:541.20px;top:258.96px;width:400px;text-align:left;font-size:7.75px;line-height:10.08px;color:#343434;transform:scaleX(0.9834);transform-origin:0 50%;">12/2/2014</div>
<div class="t" style="left:588.20px;top:258.96px;width:400px;text-align:left;font-size:7.75px;line-height:10.08px;color:#343434;transform:scaleX(0.9125);transform-origin:0 50%;">ABC sp.z.o.o.</div>
<div class="t" style="left:278.80px;top:258.96px;width:400px;text-align:right;font-size:7.75px;line-height:10.08px;color:#343434;transform:scaleX(0.9080);transform-origin:100% 50%;">94,85</div>
<div class="t" style="left:323.40px;top:258.96px;width:400px;text-align:right;font-size:7.75px;line-height:10.08px;color:#343434;transform:scaleX(0.9080);transform-origin:100% 50%;">21,82</div>
<div class="t" style="left:380.00px;top:258.96px;width:400px;text-align:right;font-size:7.75px;line-height:10.08px;color:#343434;transform:scaleX(0.9337);transform-origin:100% 50%;">116,67</div>
<div style="left:177.00px;top:270.60px;width:606.00px;height:15.15px;background:#fff;"></div>
<div class="t" style="left:-2.00px;top:273.66px;width:400px;text-align:center;font-size:7.75px;line-height:10.08px;color:#343434;transform:scaleX(0.9630);transform-origin:50% 50%;">O</div>
<div class="t" style="left:48.80px;top:273.66px;width:400px;text-align:center;font-size:7.75px;line-height:10.08px;color:#343434;transform:scaleX(0.9268);transform-origin:50% 50%;">ZZ</div>
<div class="t" style="left:132.00px;top:273.66px;width:400px;text-align:center;font-size:7.75px;line-height:10.08px;color:#343434;transform:scaleX(0.9747);transform-origin:50% 50%;">NKST Nabycie krajowe środka trwałego</div>
<div class="t" style="left:403.40px;top:273.66px;width:400px;text-align:left;font-size:7.75px;line-height:10.08px;color:#343434;transform:scaleX(0.9727);transform-origin:0 50%;">luty 2014</div>
<div class="t" style="left:449.60px;top:273.66px;width:400px;text-align:left;font-size:7.75px;line-height:10.08px;color:#343434;transform:scaleX(0.9370);transform-origin:0 50%;">06-02-2014</div>
<div class="t" style="left:495.20px;top:273.66px;width:400px;text-align:left;font-size:7.75px;line-height:10.08px;color:#343434;transform:scaleX(0.9370);transform-origin:0 50%;">06-02-2014</div>
<div class="t" style="left:541.20px;top:273.66px;width:400px;text-align:left;font-size:7.75px;line-height:10.08px;color:#343434;transform:scaleX(0.9834);transform-origin:0 50%;">12/2/2014</div>
<div class="t" style="left:588.20px;top:273.66px;width:400px;text-align:left;font-size:7.75px;line-height:10.08px;color:#343434;transform:scaleX(0.9125);transform-origin:0 50%;">ABC sp.z.o.o.</div>
<div class="t" style="left:278.80px;top:273.66px;width:400px;text-align:right;font-size:7.75px;line-height:10.08px;color:#343434;transform:scaleX(0.9110);transform-origin:100% 50%;">308,27</div>
<div class="t" style="left:323.40px;top:273.66px;width:400px;text-align:right;font-size:7.75px;line-height:10.08px;color:#343434;transform:scaleX(0.9080);transform-origin:100% 50%;">70,90</div>
<div class="t" style="left:380.00px;top:273.66px;width:400px;text-align:right;font-size:7.75px;line-height:10.08px;color:#343434;transform:scaleX(0.9110);transform-origin:100% 50%;">379,17</div>
<div style="left:177.00px;top:285.70px;width:606.00px;height:14.75px;background:#f4f4f4;"></div>
<div class="t" style="left:-2.00px;top:288.36px;width:400px;text-align:center;font-size:7.75px;line-height:10.08px;color:#343434;transform:scaleX(0.9630);transform-origin:50% 50%;">O</div>
<div class="t" style="left:48.80px;top:288.36px;width:400px;text-align:center;font-size:7.75px;line-height:10.08px;color:#343434;transform:scaleX(0.9268);transform-origin:50% 50%;">ZZ</div>
<div class="t" style="left:132.00px;top:288.36px;width:400px;text-align:center;font-size:7.75px;line-height:10.08px;color:#343434;transform:scaleX(0.9747);transform-origin:50% 50%;">NKST Nabycie krajowe środka trwałego</div>
<div class="t" style="left:403.40px;top:288.36px;width:400px;text-align:left;font-size:7.75px;line-height:10.08px;color:#343434;transform:scaleX(0.9727);transform-origin:0 50%;">luty 2014</div>
<div class="t" style="left:449.60px;top:288.36px;width:400px;text-align:left;font-size:7.75px;line-height:10.08px;color:#343434;transform:scaleX(0.9370);transform-origin:0 50%;">06-02-2014</div>
<div class="t" style="left:495.20px;top:288.36px;width:400px;text-align:left;font-size:7.75px;line-height:10.08px;color:#343434;transform:scaleX(0.9370);transform-origin:0 50%;">06-02-2014</div>
<div class="t" style="left:541.20px;top:288.36px;width:400px;text-align:left;font-size:7.75px;line-height:10.08px;color:#343434;transform:scaleX(0.9834);transform-origin:0 50%;">12/2/2014</div>
<div class="t" style="left:588.20px;top:288.36px;width:400px;text-align:left;font-size:7.75px;line-height:10.08px;color:#343434;transform:scaleX(0.9125);transform-origin:0 50%;">ABC sp.z.o.o.</div>
<div class="t" style="left:278.80px;top:288.36px;width:400px;text-align:right;font-size:7.75px;line-height:10.08px;color:#343434;transform:scaleX(0.9110);transform-origin:100% 50%;">366,53</div>
<div class="t" style="left:323.40px;top:288.36px;width:400px;text-align:right;font-size:7.75px;line-height:10.08px;color:#343434;transform:scaleX(0.9080);transform-origin:100% 50%;">84,30</div>
<div class="t" style="left:380.00px;top:288.36px;width:400px;text-align:right;font-size:7.75px;line-height:10.08px;color:#343434;transform:scaleX(0.9110);transform-origin:100% 50%;">450,83</div>
<div style="left:177.00px;top:300.40px;width:606.00px;height:14.60px;background:#fff;"></div>
<div style="left:209.70px;top:301.40px;width:0;height:12.60px;border-left:1px dotted #ececec"></div>
<div style="left:234.30px;top:301.40px;width:0;height:12.60px;border-left:1px dotted #ececec"></div>
<div style="left:262.50px;top:301.40px;width:0;height:12.60px;border-left:1px dotted #ececec"></div>
<div style="left:399.50px;top:301.40px;width:0;height:12.60px;border-left:1px dotted #ececec"></div>
<div style="left:446.00px;top:301.40px;width:0;height:12.60px;border-left:1px dotted #ececec"></div>
<div style="left:492.00px;top:301.40px;width:0;height:12.60px;border-left:1px dotted #ececec"></div>
<div style="left:538.20px;top:301.40px;width:0;height:12.60px;border-left:1px dotted #ececec"></div>
<div style="left:584.50px;top:301.40px;width:0;height:12.60px;border-left:1px dotted #ececec"></div>
<div style="left:636.50px;top:301.40px;width:0;height:12.60px;border-left:1px dotted #ececec"></div>
<div style="left:680.30px;top:301.40px;width:0;height:12.60px;border-left:1px dotted #ececec"></div>
<div style="left:725.10px;top:301.40px;width:0;height:12.60px;border-left:1px dotted #ececec"></div>
<div class="t" style="left:278.80px;top:305.06px;width:400px;text-align:right;font-size:7.75px;line-height:10.08px;color:#343434;transform:scaleX(0.9187);transform-origin:100% 50%;">16 500,00</div>
<div class="t" style="left:323.40px;top:305.06px;width:400px;text-align:right;font-size:7.75px;line-height:10.08px;color:#343434;transform:scaleX(0.9179);transform-origin:100% 50%;">3 315,00</div>
<div class="t" style="left:380.00px;top:305.06px;width:400px;text-align:right;font-size:7.75px;line-height:10.08px;color:#343434;transform:scaleX(0.9187);transform-origin:100% 50%;">19 815,00</div>
<div style="left:783.00px;top:108.20px;width:10.00px;height:206.80px;background:#f0f0f0;"></div>
<div style="left:786.60px;top:120.60px;width:6.20px;height:100.40px;background:#7a7a7a;"></div>
<svg width="6" height="4" viewBox="0 0 6 4" style="left:786.4px;top:112px"><polyline points="0.6,3.4 3,0.8 5.4,3.4" fill="none" stroke="#555" stroke-width="0.9"/></svg>
<svg width="6" height="4" viewBox="0 0 6 4" style="left:786.4px;top:308.4px"><polyline points="0.6,0.6 3,3.2 5.4,0.6" fill="none" stroke="#555" stroke-width="0.9"/></svg>
<div style="left:177.00px;top:315.00px;width:616.00px;height:1.20px;background:#d4d4d4;"></div>
<div style="left:177.00px;top:316.20px;width:616.00px;height:4.40px;background:#e9e9e9;"></div>
<div style="left:177.00px;top:320.60px;width:616.00px;height:16.60px;background:#ebebeb;"></div>
<div style="left:177.00px;top:320.20px;width:616.00px;height:0.80px;background:#f8f8f8;"></div>
<div style="left:343.70px;top:321.00px;width:66.00px;height:16.40px;background:#fff;"></div>
<div style="left:177.00px;top:337.20px;width:616.00px;height:0.90px;background:#d8d8d8;"></div>
<div style="left:343.70px;top:337.00px;width:66.00px;height:1.20px;background:#fff;"></div>
<div style="left:177.00px;top:338.10px;width:616.00px;height:149.00px;background:#f0f0f0;"></div>
<div class="t" style="left:185.70px;top:323.56px;width:400px;text-align:left;font-size:7.75px;line-height:10.08px;color:#6e6e6e;transform:scaleX(0.9563);transform-origin:0 50%;">WIZYTÓWKA</div>
<div class="t" style="left:244.00px;top:323.56px;width:400px;text-align:left;font-size:7.75px;line-height:10.08px;color:#6e6e6e;transform:scaleX(0.9016);transform-origin:0 50%;">ZDARZENIE</div>
<div class="t" style="left:296.80px;top:323.56px;width:400px;text-align:left;font-size:7.75px;line-height:10.08px;color:#6e6e6e;transform:scaleX(0.8649);transform-origin:0 50%;">SZCZEGÓŁY</div>
<div class="t" style="left:350.00px;top:323.56px;width:400px;text-align:left;font-size:7.75px;line-height:10.08px;color:#6e6e6e;transform:scaleX(0.9005);transform-origin:0 50%;">ROZRACHUNEK</div>
<div class="t" style="left:417.00px;top:323.56px;width:400px;text-align:left;font-size:7.75px;line-height:10.08px;color:#6e6e6e;transform:scaleX(0.9250);transform-origin:0 50%;">POLA WŁASNE</div>
<div style="left:254.60px;top:342.00px;width:171.00px;height:13.00px;background:#f8f8f8;"></div>
<div style="left:254.60px;top:357.40px;width:171.00px;height:13.00px;background:#f8f8f8;"></div>
<div class="t" style="left:187.00px;top:344.16px;width:400px;text-align:left;font-size:7.75px;line-height:10.08px;color:#343434;transform:scaleX(0.9478);transform-origin:0 50%;">Rozrachunek:</div>
<div class="t" style="left:187.00px;top:359.56px;width:400px;text-align:left;font-size:7.75px;line-height:10.08px;color:#343434;transform:scaleX(0.9613);transform-origin:0 50%;">Status powiązania:</div>
<div class="t" style="left:256.00px;top:344.16px;width:400px;text-align:left;font-size:7.75px;line-height:10.08px;color:#343434;transform:scaleX(0.9812);transform-origin:0 50%;">Zobowiązanie</div>
<div class="t" style="left:256.00px;top:359.56px;width:400px;text-align:left;font-size:7.75px;line-height:10.08px;color:#343434;">Utworzony</div>
<svg width="5" height="5" viewBox="0 0 5 5" style="left:417.0px;top:346.0px"><path d="M0,0.6 H5 M0,2.5 H5 M0,4.4 H5" stroke="#777" stroke-width="0.7"/></svg>
<div style="left:668.00px;top:342.00px;width:107.20px;height:13.00px;background:#f8f8f8;"></div>
<div style="left:668.00px;top:357.40px;width:107.20px;height:13.00px;background:#f8f8f8;"></div>
<div class="t" style="left:604.80px;top:344.16px;width:400px;text-align:left;font-size:7.75px;line-height:10.08px;color:#343434;transform:scaleX(0.9596);transform-origin:0 50%;">Kwota:</div>
<div class="t" style="left:604.80px;top:359.16px;width:400px;text-align:left;font-size:7.75px;line-height:10.08px;color:#343434;transform:scaleX(0.9946);transform-origin:0 50%;">Termin płatności:</div>
<div class="t" style="left:361.40px;top:344.16px;width:400px;text-align:right;font-size:7.75px;line-height:10.08px;color:#343434;transform:scaleX(0.9182);transform-origin:100% 50%;">14 760,00 PLN</div>
<div class="t" style="left:669.20px;top:359.16px;width:400px;text-align:left;font-size:7.75px;line-height:10.08px;color:#343434;transform:scaleX(0.9370);transform-origin:0 50%;">20-02-2014</div>
<svg width="5" height="5" viewBox="0 0 5 5" style="left:766.4px;top:346.0px"><path d="M0,0.6 H5 M0,2.5 H5 M0,4.4 H5" stroke="#777" stroke-width="0.7"/></svg>
<div class="t" style="left:187.00px;top:382.35px;width:400px;text-align:left;font-size:9.0px;line-height:11.7px;color:#a8a8a8;transform:scaleX(0.9639);transform-origin:0 50%;">Rozliczenia</div>
<div class="t" style="left:12.00px;top:395.46px;width:400px;text-align:center;font-size:7.75px;line-height:10.08px;color:#343434;transform:scaleX(0.8229);transform-origin:50% 50%;">R</div>
<div class="t" style="left:124.30px;top:395.46px;width:400px;text-align:center;font-size:7.75px;line-height:10.08px;color:#343434;transform:scaleX(1.0110);transform-origin:50% 50%;">Dokument</div>
<div class="t" style="left:255.80px;top:395.46px;width:400px;text-align:center;font-size:7.75px;line-height:10.08px;color:#343434;">Termin płatności</div>
<div class="t" style="left:342.00px;top:395.46px;width:400px;text-align:center;font-size:7.75px;line-height:10.08px;color:#343434;transform:scaleX(0.9780);transform-origin:50% 50%;">Kwota</div>
<div class="t" style="left:428.60px;top:395.46px;width:400px;text-align:center;font-size:7.75px;line-height:10.08px;color:#343434;transform:scaleX(0.9693);transform-origin:50% 50%;">Pozostało</div>
<div class="t" style="left:523.80px;top:395.46px;width:400px;text-align:center;font-size:7.75px;line-height:10.08px;color:#343434;transform:scaleX(0.9746);transform-origin:50% 50%;">Kwota rozliczenia</div>
<div style="left:188.20px;top:405.40px;width:587.00px;height:0.90px;background:#bdbdbd;"></div>
<div style="left:188.20px;top:406.30px;width:587.00px;height:14.72px;background:#f9f9f9;"></div>
<div style="left:188.20px;top:420.22px;width:587.00px;height:0.80px;background:#f1f1f1;"></div>
<div style="left:235.50px;top:406.30px;width:1.00px;height:14.72px;background:#f0f0f0;"></div>
<div style="left:412.10px;top:406.30px;width:1.00px;height:14.72px;background:#f0f0f0;"></div>
<div style="left:498.50px;top:406.30px;width:1.00px;height:14.72px;background:#f0f0f0;"></div>
<div style="left:584.50px;top:406.30px;width:1.00px;height:14.72px;background:#f0f0f0;"></div>
<div style="left:671.50px;top:406.30px;width:1.00px;height:14.72px;background:#f0f0f0;"></div>
<svg width="10" height="10" viewBox="0 0 10 10" style="left:207.2px;top:409.76px"><rect x="0.5" y="0.5" width="8.6" height="8.6" fill="#fff" stroke="#b9b9b9" stroke-width="0.8"/><polyline points="2.2,4.8 4,6.8 7.6,2.4" fill="none" stroke="#1a6fd0" stroke-width="1.4"/></svg>
<div class="t" style="left:240.00px;top:409.72px;width:400px;text-align:left;font-size:7.75px;line-height:10.08px;color:#343434;transform:scaleX(0.9711);transform-origin:0 50%;">Dyspozycja bankowa</div>
<div class="t" style="left:182.00px;top:409.72px;width:400px;text-align:right;font-size:7.75px;line-height:10.08px;color:#343434;transform:scaleX(0.9136);transform-origin:100% 50%;">455,00 PLN</div>
<div class="t" style="left:268.60px;top:409.72px;width:400px;text-align:right;font-size:7.75px;line-height:10.08px;color:#343434;transform:scaleX(0.9107);transform-origin:100% 50%;">0,00 PLN</div>
<div class="t" style="left:372.00px;top:409.72px;width:400px;text-align:right;font-size:7.75px;line-height:10.08px;color:#343434;transform:scaleX(0.9136);transform-origin:100% 50%;">455,00 PLN</div>
<div style="left:188.20px;top:421.02px;width:587.00px;height:14.72px;background:#f9f9f9;"></div>
<div style="left:188.20px;top:434.94px;width:587.00px;height:0.80px;background:#f1f1f1;"></div>
<div style="left:235.50px;top:421.02px;width:1.00px;height:14.72px;background:#f0f0f0;"></div>
<div style="left:412.10px;top:421.02px;width:1.00px;height:14.72px;background:#f0f0f0;"></div>
<div style="left:498.50px;top:421.02px;width:1.00px;height:14.72px;background:#f0f0f0;"></div>
<div style="left:584.50px;top:421.02px;width:1.00px;height:14.72px;background:#f0f0f0;"></div>
<div style="left:671.50px;top:421.02px;width:1.00px;height:14.72px;background:#f0f0f0;"></div>
<svg width="10" height="10" viewBox="0 0 10 10" style="left:207.2px;top:424.48px"><rect x="0.5" y="0.5" width="8.6" height="8.6" fill="#fff" stroke="#b9b9b9" stroke-width="0.8"/><polyline points="2.2,4.8 4,6.8 7.6,2.4" fill="none" stroke="#1a6fd0" stroke-width="1.4"/></svg>
<div class="t" style="left:240.00px;top:424.44px;width:400px;text-align:left;font-size:7.75px;line-height:10.08px;color:#343434;transform:scaleX(0.9504);transform-origin:0 50%;">KW 2/KAS/2014</div>
<div class="t" style="left:182.00px;top:424.44px;width:400px;text-align:right;font-size:7.75px;line-height:10.08px;color:#343434;transform:scaleX(0.9136);transform-origin:100% 50%;">260,00 PLN</div>
<div class="t" style="left:268.60px;top:424.44px;width:400px;text-align:right;font-size:7.75px;line-height:10.08px;color:#343434;transform:scaleX(0.9107);transform-origin:100% 50%;">0,00 PLN</div>
<div class="t" style="left:372.00px;top:424.44px;width:400px;text-align:right;font-size:7.75px;line-height:10.08px;color:#343434;transform:scaleX(0.9136);transform-origin:100% 50%;">140,00 PLN</div>
<div style="left:188.20px;top:435.74px;width:587.00px;height:14.72px;background:#f9f9f9;"></div>
<div style="left:188.20px;top:449.66px;width:587.00px;height:0.80px;background:#f1f1f1;"></div>
<div style="left:235.50px;top:435.74px;width:1.00px;height:14.72px;background:#f0f0f0;"></div>
<div style="left:412.10px;top:435.74px;width:1.00px;height:14.72px;background:#f0f0f0;"></div>
<div style="left:498.50px;top:435.74px;width:1.00px;height:14.72px;background:#f0f0f0;"></div>
<div style="left:584.50px;top:435.74px;width:1.00px;height:14.72px;background:#f0f0f0;"></div>
<div style="left:671.50px;top:435.74px;width:1.00px;height:14.72px;background:#f0f0f0;"></div>
<svg width="10" height="10" viewBox="0 0 10 10" style="left:207.2px;top:439.20px"><rect x="0.5" y="0.5" width="8.6" height="8.6" fill="#fff" stroke="#b9b9b9" stroke-width="0.8"/><polyline points="2.2,4.8 4,6.8 7.6,2.4" fill="none" stroke="#1a6fd0" stroke-width="1.4"/></svg>
<div class="t" style="left:240.00px;top:439.16px;width:400px;text-align:left;font-size:7.75px;line-height:10.08px;color:#343434;transform:scaleX(0.9504);transform-origin:0 50%;">KW 4/KAS/2014</div>
<div class="t" style="left:182.00px;top:439.16px;width:400px;text-align:right;font-size:7.75px;line-height:10.08px;color:#343434;transform:scaleX(0.9136);transform-origin:100% 50%;">541,00 PLN</div>
<div class="t" style="left:268.60px;top:439.16px;width:400px;text-align:right;font-size:7.75px;line-height:10.08px;color:#343434;transform:scaleX(0.9107);transform-origin:100% 50%;">0,00 PLN</div>
<div class="t" style="left:372.00px;top:439.16px;width:400px;text-align:right;font-size:7.75px;line-height:10.08px;color:#343434;transform:scaleX(0.9136);transform-origin:100% 50%;">541,00 PLN</div>
<div style="left:703.00px;top:455.00px;width:69.20px;height:12.60px;background:#f8f8f8;"></div>
<div style="left:703.00px;top:470.40px;width:69.20px;height:12.40px;background:#f8f8f8;"></div>
<div class="t" style="left:645.00px;top:456.96px;width:400px;text-align:left;font-size:7.75px;line-height:10.08px;color:#343434;transform:scaleX(0.9590);transform-origin:0 50%;">Rozliczono:</div>
<div class="t" style="left:645.00px;top:472.16px;width:400px;text-align:left;font-size:7.75px;line-height:10.08px;color:#343434;transform:scaleX(0.9698);transform-origin:0 50%;">Do rozliczenia:</div>
<div class="t" style="left:370.80px;top:456.96px;width:400px;text-align:right;font-size:7.75px;line-height:10.08px;color:#343434;transform:scaleX(0.9176);transform-origin:100% 50%;">1 136,00 PLN</div>
<div class="t" style="left:370.80px;top:472.16px;width:400px;text-align:right;font-size:7.75px;line-height:10.08px;color:#343434;transform:scaleX(0.9182);transform-origin:100% 50%;">13 624,00 PLN</div>
<div style="left:783.00px;top:338.10px;width:10.00px;height:149.00px;background:#efefef;"></div>
<div style="left:786.80px;top:349.40px;width:6.20px;height:124.40px;background:#7a7a7a;"></div>
<svg width="6" height="4" viewBox="0 0 6 4" style="left:786.4px;top:341.6px"><polyline points="0.6,3.4 3,0.8 5.4,3.4" fill="none" stroke="#555" stroke-width="0.9"/></svg>
<svg width="6" height="4" viewBox="0 0 6 4" style="left:786.4px;top:479.6px"><polygon points="0.4,0.6 5.6,0.6 3,3.6" fill="#555"/></svg>
<div class="t" style="left:792.60px;top:477.31px;width:400px;text-align:left;font-size:6.6px;line-height:8.58px;color:#444;transform:scaleX(1.5874);transform-origin:0 50%;">/-</div>
</div></body></html>
